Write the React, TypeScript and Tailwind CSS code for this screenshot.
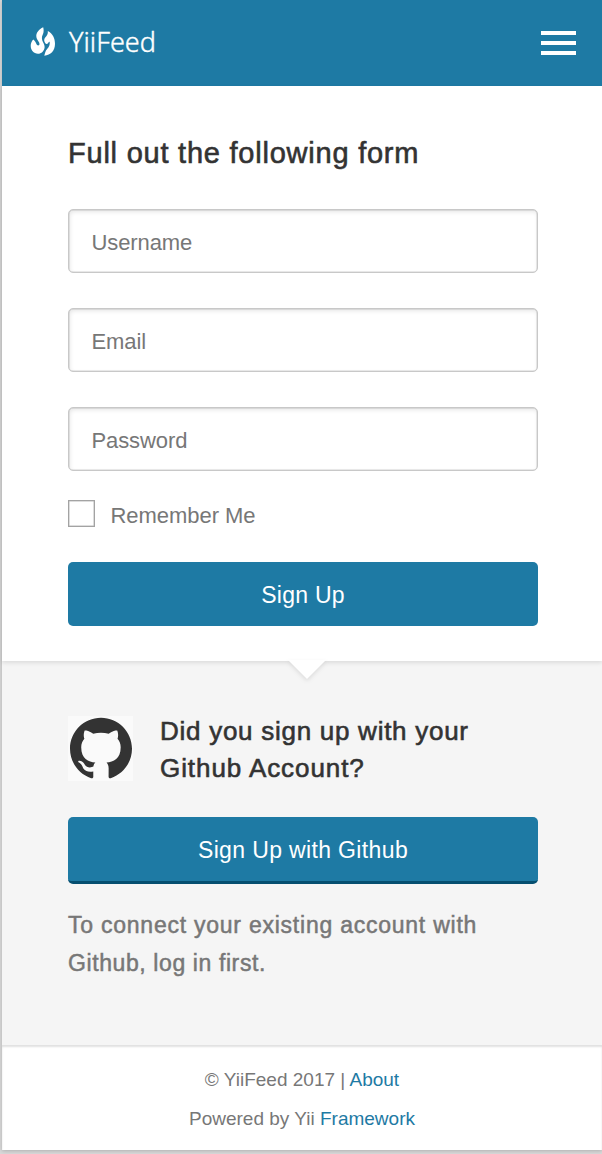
import React from "react";

const fields = ["Username", "Email", "Password"];

function Flame() {
  return (
    <svg viewBox="0 0 26 30" className="h-[30px] w-[26px] shrink-0" fill="#fff">
      <path d="M13.200 0.300C7.600 3 4.900 7.800 7 12C8.400 14.600 10 16 9.300 17.800C8.400 19 6.800 18.300 6.200 16.500C5.700 14.900 4.900 13.600 3.300 12.400C0.300 15.200 -0.200 20.700 2.400 24C5.200 27.400 9.900 27.400 12.400 24.900C14.900 22.200 15.200 19.400 13.700 16.500C12 13.200 11.200 10.700 12.700 7.800C13.800 5.400 13.900 3.500 13.200 0.300Z" />
      <path d="M17.800 4C18.200 6.800 17 8.500 15.400 10.200C13.600 12.400 14 14.200 15.300 16.200C16 17.200 17.300 17.300 18.200 16C18.800 15.100 19.200 14.500 19.700 15C20 17.900 19.100 20 17.100 22C15.300 24 15 26.200 14.300 28.700C20.700 28.300 25 23.800 25 16.800C25 11.300 22.700 6.700 17.800 4Z" />
    </svg>
  );
}

export default function App() {
  return (
    <div className="h-[1154px] w-full overflow-hidden bg-[#d9d9d9] pl-[2px] font-['Liberation_Sans',Arial,sans-serif]">
      <div className="flex h-[1150px] flex-col bg-white shadow-[0_1px_4px_rgba(0,0,0,0.2)]">
        <header className="flex h-[86px] shrink-0 items-center justify-between bg-[#1e7aa4] pr-[26px] pl-[28px]">
          <a className="flex items-center gap-[13px]">
            <span className="-mt-[3px]">
              <Flame />
            </span>
            <span className="-mt-[2px] font-['Noto_Sans',sans-serif] text-[27px] leading-[30px] font-light tracking-[0.05px] text-white [-webkit-text-stroke:0.4px_#fff]">
              YiiFeed
            </span>
          </a>
          <button aria-label="Menu" className="flex w-[35px] flex-col gap-[6px]">
            <span className="h-[4px] bg-white" />
            <span className="h-[4px] bg-white" />
            <span className="h-[4px] bg-white" />
          </button>
        </header>

        <main className="relative z-10 flex h-[575px] shrink-0 flex-col bg-white pt-[47px] pr-[64px] pl-[66px] shadow-[0_2px_4px_rgba(0,0,0,0.1)]">
          <h1 className="h-[40px] text-[29px] leading-[40px] tracking-[0.77px] whitespace-nowrap text-[#333] [-webkit-text-stroke:0.6px_#333]">
            Full out the following form
          </h1>
          <form className="mt-[36px] flex flex-col">
            <div className="flex flex-col gap-[35px]">
              {fields.map((name) => (
                <input
                  key={name}
                  placeholder={name}
                  className="h-[64px] rounded-[5px] border-[1.5px] border-[#c8c8c8] bg-white px-[22.5px] pt-[3px] text-[22px] tracking-[-0.1px] shadow-[inset_1px_2px_4px_rgba(0,0,0,0.1),inset_0_0_0_0.5px_#d8d8d8] placeholder:text-[#777]"
                />
              ))}
            </div>
            <label className="mt-[29px] flex h-[27px] items-center gap-[16px] text-[22px] tracking-[-0.05px] text-[#777]">
              <input type="checkbox" className="size-[27px] appearance-none border border-[#a3a3a3] bg-white shadow-[inset_0_0_0_0.5px_#bbb]" />
              <span className="-ml-[0.5px] pt-[4px]">Remember Me</span>
            </label>
            <button type="button" className="mt-[34.5px] h-[64.500px] rounded-[5px] bg-[#1e7aa4] pt-[3px] text-[23px] tracking-[0.25px] text-white">
              Sign Up
            </button>
          </form>
          <svg viewBox="0 0 40 24" className="absolute top-[573px] left-[285px] h-[24px] w-[40px] drop-shadow-[0_2px_2px_rgba(0,0,0,0.1)]">
            <path d="M1 1H39L20 20Z" fill="#fff" />
          </svg>
        </main>

        <section className="flex h-[384px] shrink-0 flex-col bg-[#f5f5f5] pt-[52px] pr-[64px] pl-[66px]">
          <div className="flex gap-[27px]">
            <div className="mt-[3px] flex size-[65px] bg-[#fafafa] pt-[0.5px] pl-[1.5px]">
              <svg viewBox="0 0 24 24" className="size-[62px]" fill="#333">
                <path d="M12 .297c-6.63 0-12 5.373-12 12 0 5.303 3.438 9.800 8.205 11.385.6.113.82-.258.82-.577 0-.285-.01-1.040-.015-2.040-3.338.724-4.042-1.610-4.042-1.610C4.422 18.070 3.633 17.700 3.633 17.700c-1.087-.744.084-.729.084-.729 1.205.084 1.838 1.236 1.838 1.236 1.070 1.835 2.809 1.305 3.495.998.108-.776.417-1.305.760-1.605-2.665-.3-5.466-1.332-5.466-5.930 0-1.310.465-2.380 1.235-3.220-.135-.303-.540-1.523.105-3.176 0 0 1.005-.322 3.300 1.230.960-.267 1.980-.399 3-.405 1.020.006 2.040.138 3 .405 2.280-1.552 3.285-1.230 3.285-1.230.645 1.653.240 2.873.120 3.176.765.840 1.230 1.910 1.230 3.220 0 4.610-2.805 5.625-5.475 5.920.420.360.810 1.096.810 2.220 0 1.606-.015 2.896-.015 3.286 0 .315.210.690.825.570C20.565 22.092 24 17.592 24 12.297c0-6.627-5.373-12-12-12" />
              </svg>
            </div>
            <h2 className="text-[26px] leading-[37px] tracking-[0.73px] whitespace-nowrap text-[#333] [-webkit-text-stroke:0.6px_#333]">
              Did you sign up with your
              <br />
              <span className="tracking-[0.93px]">Github Account?</span>
            </h2>
          </div>
          <button className="mt-[30px] h-[67px] shrink-0 rounded-[5px] border-b-[3px] border-[#064f70] bg-[#1e7aa4] pt-[2px] text-[23px] tracking-[0.36px] text-white">
            Sign Up with Github
          </button>
          <p className="mt-[22px] text-[23px] leading-[38px] tracking-[0.76px] whitespace-nowrap text-[#777] [-webkit-text-stroke:0.5px_#777]">
            To connect your existing account with
            <br />
            <span className="tracking-[0.6px]">Github, log in first.</span>
          </p>
        </section>

        <footer className="flex grow flex-col items-center pt-[15px] text-[19px] leading-[39px] text-[#777] shadow-[inset_0_2px_2px_rgba(0,0,0,0.12)]">
          <p>
            © YiiFeed 2017 | <a className="text-[#1e7aa4]">About</a>
          </p>
          <p>
            Powered by Yii <a className="text-[#1e7aa4]">Framework</a>
          </p>
        </footer>
      </div>
    </div>
  );
}
